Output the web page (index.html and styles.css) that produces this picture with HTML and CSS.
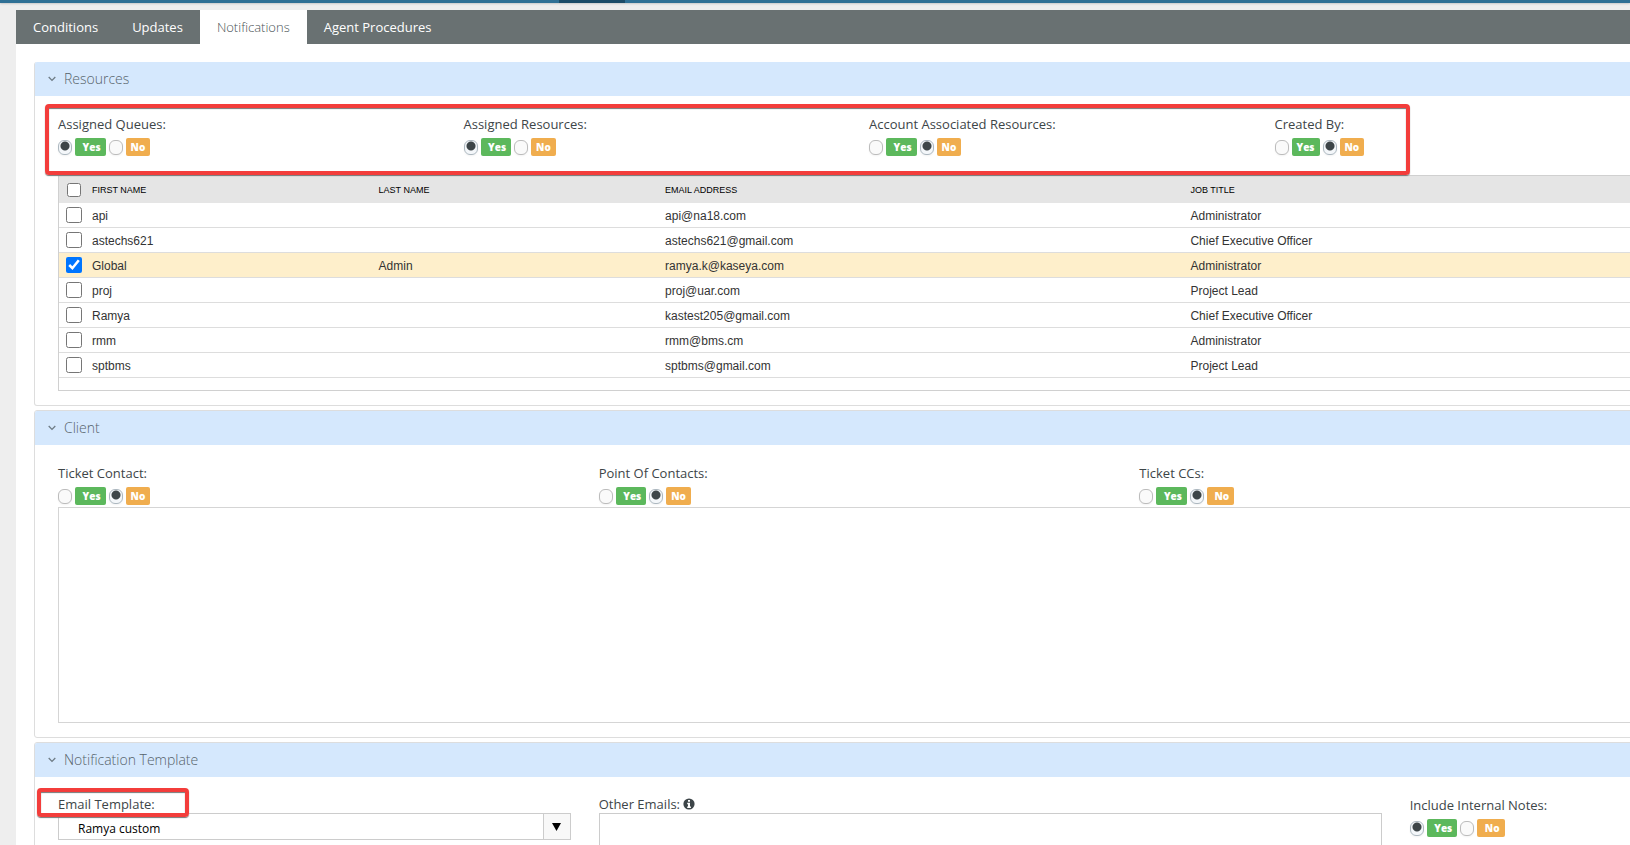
FILE: index.html
```
<!DOCTYPE html>
<html lang="en">
<head>
<meta charset="utf-8">
<title>Notifications</title>
<link rel="stylesheet" href="styles.css">
</head>
<body>
<div class="topbar"><span class="topbar-active"></span></div>
<div class="page">
  <nav class="tabs">
    <a class="tab" href="#conditions">Conditions</a>
    <a class="tab" href="#updates">Updates</a>
    <a class="tab active" href="#notifications">Notifications</a>
    <a class="tab" href="#procedures">Agent Procedures</a>
  </nav>
  <main class="content">
    <section class="panel">
      <h2 class="panel-head"><svg class="chevron" viewBox="0 0 8 6"><path d="M0.7 1l3.3 3.4L7.3 1"/></svg>Resources</h2>
      <div class="panel-body">
        <div class="row quarters framed">
          <fieldset class="field"><legend>Assigned Queues:</legend><div class="choices">
            <label><input type="radio" name="queues" checked><span class="badge yes">&nbsp;Yes</span></label>
            <label><input type="radio" name="queues"><span class="badge no">No</span></label></div></fieldset>
          <fieldset class="field"><legend>Assigned Resources:</legend><div class="choices">
            <label><input type="radio" name="assigned" checked><span class="badge yes">&nbsp;Yes</span></label>
            <label><input type="radio" name="assigned"><span class="badge no">No</span></label></div></fieldset>
          <fieldset class="field"><legend>Account Associated Resources:</legend><div class="choices">
            <label><input type="radio" name="account"><span class="badge yes">&nbsp;Yes</span></label>
            <label><input type="radio" name="account" checked><span class="badge no">No</span></label></div></fieldset>
          <fieldset class="field"><legend>Created By:</legend><div class="choices">
            <label><input type="radio" name="created"><span class="badge yes">Yes</span></label>
            <label><input type="radio" name="created" checked><span class="badge no">No</span></label></div></fieldset>
        </div>
        <div class="grid">
          <table class="table">
            <colgroup><col class="c-check"><col class="c-name"><col class="c-name"><col class="c-mail"><col></colgroup>
            <thead><tr><th><input type="checkbox" aria-label="Select all"></th><th>FIRST NAME</th><th>LAST NAME</th><th>EMAIL ADDRESS</th><th>JOB TITLE</th></tr></thead>
            <tbody>
              <tr><td><input type="checkbox" aria-label="Select api"></td><td>api</td><td></td><td>api@na18.com</td><td>Administrator</td></tr>
              <tr><td><input type="checkbox" aria-label="Select astechs621"></td><td>astechs621</td><td></td><td>astechs621@gmail.com</td><td>Chief Executive Officer</td></tr>
              <tr class="selected"><td><input type="checkbox" aria-label="Select Global Admin" checked></td><td>Global</td><td>Admin</td><td>ramya.k@kaseya.com</td><td>Administrator</td></tr>
              <tr><td><input type="checkbox" aria-label="Select proj"></td><td>proj</td><td></td><td>proj@uar.com</td><td>Project Lead</td></tr>
              <tr><td><input type="checkbox" aria-label="Select Ramya"></td><td>Ramya</td><td></td><td>kastest205@gmail.com</td><td>Chief Executive Officer</td></tr>
              <tr><td><input type="checkbox" aria-label="Select rmm"></td><td>rmm</td><td></td><td>rmm@bms.cm</td><td>Administrator</td></tr>
              <tr><td><input type="checkbox" aria-label="Select sptbms"></td><td>sptbms</td><td></td><td>sptbms@gmail.com</td><td>Project Lead</td></tr>
            </tbody>
          </table>
        </div>
      </div>
    </section>
    <section class="panel">
      <h2 class="panel-head"><svg class="chevron" viewBox="0 0 8 6"><path d="M0.7 1l3.3 3.4L7.3 1"/></svg>Client</h2>
      <div class="panel-body">
        <div class="row thirds">
          <fieldset class="field"><legend>Ticket Contact:</legend><div class="choices">
            <label><input type="radio" name="contact"><span class="badge yes">&nbsp;Yes</span></label>
            <label><input type="radio" name="contact" checked><span class="badge no">No</span></label></div></fieldset>
          <fieldset class="field"><legend>Point Of Contacts:</legend><div class="choices">
            <label><input type="radio" name="point"><span class="badge yes">&nbsp;Yes</span></label>
            <label><input type="radio" name="point" checked><span class="badge no">No</span></label></div></fieldset>
          <fieldset class="field"><legend>Ticket CCs:</legend><div class="choices">
            <label><input type="radio" name="ccs"><span class="badge yes">&nbsp;Yes</span></label>
            <label><input type="radio" name="ccs" checked><span class="badge no">&nbsp;No</span></label></div></fieldset>
        </div>
        <div class="list-box"></div>
      </div>
    </section>
    <section class="panel">
      <h2 class="panel-head"><svg class="chevron" viewBox="0 0 8 6"><path d="M0.7 1l3.3 3.4L7.3 1"/></svg>Notification Template</h2>
      <div class="panel-body">
        <div class="row template">
          <div class="field">
            <label class="caption marked" for="template">Email Template:</label>
            <div class="combo">
              <select id="template"><option>Ramya custom</option></select>
              <span class="combo-arrow"><svg viewBox="0 0 9 8"><path d="M0 0h9L4.5 8z"/></svg></span>
            </div>
          </div>
          <div class="field">
            <label class="caption" for="emails">Other Emails: <svg class="info" viewBox="0 0 12 12"><circle cx="6" cy="6" r="5.6"/><path d="M5 2h2v1.700H5zM4.200 4.800H7v3.700h.9V10H4.200V8.500H5V6.300h-.8z"/></svg></label>
            <textarea id="emails"></textarea>
          </div>
          <fieldset class="field"><legend>Include Internal Notes:</legend><div class="choices">
            <label><input type="radio" name="notes" checked><span class="badge yes">&nbsp;Yes</span></label>
            <label><input type="radio" name="notes"><span class="badge no">&nbsp;No</span></label></div></fieldset>
        </div>
      </div>
    </section>
  </main>
</div>
</body>
</html>
```
FILE: styles.css
```
* { box-sizing: border-box; }
html, body { height: 100%; overflow: hidden; }
body {
  margin: 0;
  background: #eee;
  color: #3d4548;
  font: 13px/20px "Open Sans", sans-serif;
}
.topbar {
  height: 3px;
  padding-left: 559px;
  background: #2f7095;
  box-shadow: 0 1px 2px rgba(0, 0, 0, .15);
}
.topbar-active { display: block; width: 66px; height: 3px; background: #1c4c68; }

/* The form is wider than the viewport and runs off its right edge. */
.page { width: calc(100% + 64px); padding: 7px 0 0 16px; }
.tabs { display: flex; background: #697172; }
.tab { padding: 7px 17px; color: #fff; text-decoration: none; }
.tab.active { background: #fff; color: #4a5456; font-weight: 300; }
.content { padding: 18px; background: #fff; }

.panel { margin-bottom: 4px; border: 1px solid #ddd; border-radius: 3px; }
.panel:first-child { border-top: 0; }
.panel-head {
  display: flex;
  align-items: center;
  gap: 8px;
  height: 34px;
  margin: 0;
  padding-left: 13px;
  background: #d5e8fd;
  border-radius: 2px 2px 0 0;
  color: #56636a;
  font-size: 14px;
  font-weight: 300;
}
.chevron { width: 8px; height: 6px; fill: none; stroke: #6f7d86; stroke-width: 1.3; }
.panel-body { padding: 18px 9px 14px; }

.row { display: grid; position: relative; }
.quarters { grid-template-columns: repeat(4, 1fr); margin-bottom: 19px; }
.thirds { grid-template-columns: repeat(3, 1fr); margin-bottom: 2px; }
.template { grid-template-columns: 4fr 6fr 2fr; }
.field { min-width: 0; margin: 0; padding: 0 14px; border: 0; }
legend { padding: 0; }
.caption { display: flex; align-items: center; gap: 3px; height: 18px; }
.choices { display: flex; gap: 3px; padding-top: 4px; }
.choices label { display: flex; align-items: center; gap: 3px; }

input { margin: 0; }
input[type="radio"] {
  appearance: none;
  width: 14px;
  height: 15px;
  border: 1px solid #bcbcbc;
  border-radius: 6px;
  background: #fafafa;
  box-shadow: 0 1px 2px rgba(0, 0, 0, .05);
}
input[type="radio"]:checked {
  border-color: #adb8c0;
  background: radial-gradient(circle at 6px 5px, #3d4548 4px, #f4f7fa 5px);
}
.badge {
  height: 18px;
  padding: 0 5px;
  border-radius: 2px;
  color: #fff;
  font-size: 10px;
  font-weight: 800;
  line-height: 18px;
}
.yes { background: #5cb85c; }
.no { background: #f0ad4e; }

.framed::after,
.marked::after {
  content: "";
  position: absolute;
  border: 4px solid #f33d3b;
  border-radius: 4px;
  box-shadow: 0 1px 1px #777, inset 0 1px 1px #777;
  pointer-events: none;
}
.framed::after { top: -10px; right: 256px; bottom: -19px; left: 1px; }
.marked::after { top: -7px; left: -7px; width: 144px; height: 21px; z-index: 1; }

.grid {
  margin: 0 14px;
  padding-bottom: 12px;
  border: 1px solid #d0d0d0;
  font-family: "Liberation Sans", Arial, sans-serif;
  font-size: 12px;
}
.table { width: 100%; table-layout: fixed; border-collapse: separate; border-spacing: 0; color: #333; }
.c-check { width: 33px; }
.c-name { width: 18%; }
.c-mail { width: 33%; }
.table th { height: 27px; padding: 0; background: #e5e5e5; color: #000; font-size: 9px; font-weight: 400; text-align: left; }
.table td { height: 25px; padding: 2px 0 0; border-bottom: 1px solid #ddd; line-height: 16px; }
.table th:first-child, .table td:first-child { padding-left: 7px; line-height: 0; }
.table td:first-child { padding-top: 0; }
.table th:first-child { padding-left: 8px; }
.table input { width: 16px; height: 16px; vertical-align: middle; }
.table th input { width: 14px; height: 14px; }
.table .selected td { background: #feefcb; }

.list-box { height: 216px; margin: 0 14px; border: 1px solid #d5d5d5; }

.combo { position: relative; height: 27px; border: 1px solid #ccc; }
.combo select {
  appearance: none;
  display: block;
  width: 100%;
  height: 25px;
  padding: 4px 32px 0 19px;
  border: 0;
  background: #fff;
  color: #000;
  font: 12px/20px "Open Sans", sans-serif;
}
.combo-arrow {
  position: absolute;
  top: 0;
  right: 0;
  bottom: 0;
  display: flex;
  align-items: center;
  justify-content: center;
  width: 27px;
  border-left: 1px solid #ccc;
  background: #f8f8f8;
  pointer-events: none;
}
.combo-arrow svg { width: 9px; height: 8px; }
.info { width: 12px; height: 12px; fill: #3d4548; }
.info path { fill: #fff; }
textarea { display: block; width: 100%; height: 80px; border: 1px solid #ccc; resize: none; }
```
